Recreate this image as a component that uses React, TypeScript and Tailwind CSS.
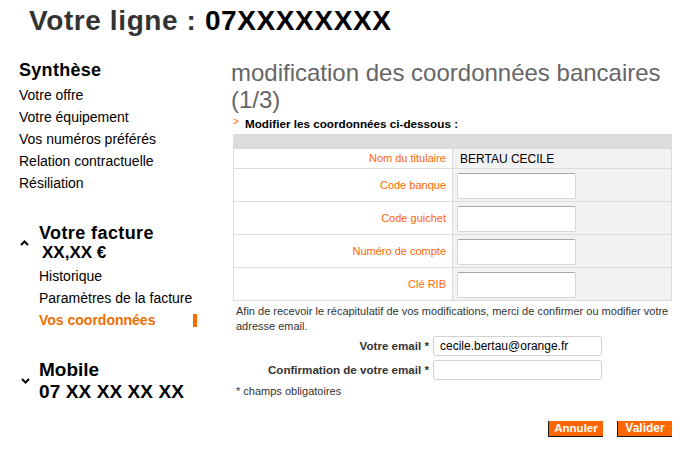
import React from "react";

function Field({ label }: { label: string }) {
  return (
    <div className="flex h-[33px] border-t border-[#dcdcdc]">
      <div className="w-[219px] shrink-0 border-r border-[#dcdcdc] flex items-center justify-end pr-[6px] text-[11px] text-[#ff6600]">
        {label}
      </div>
      <div className="flex-1 bg-[#f2f2f2] pt-[4px] pl-[4px]">
        <div className="w-[119px] h-[26px] bg-white border border-[#d6d6d6] border-t-[#a8a8a8] rounded-[2px]" />
      </div>
    </div>
  );
}

export default function App() {
  return (
    <div className="w-[686px] h-[454px] bg-white overflow-hidden font-['Liberation_Sans',Arial,Helvetica,sans-serif]">
      <div className="h-[41px] pl-[29px] text-[28px] leading-[41px] font-bold tracking-[0.6px] whitespace-nowrap">
        <span className="text-[#333333]">Votre ligne : </span>
        <span className="text-black">07XXXXXXXX</span>
      </div>
      <div className="flex">
        <aside className="w-[231px] shrink-0 pl-[19px] pt-[17px] text-black">
          <div className="text-[18px] leading-[24px] font-bold tracking-[0.3px]">Synthèse</div>
          <ul className="mt-[2px] text-[14px] leading-[22px]">
            <li>Votre offre</li>
            <li>Votre équipement</li>
            <li>Vos numéros préférés</li>
            <li>Relation contractuelle</li>
            <li>Résiliation</li>
          </ul>
          <div className="mt-[29px] flex items-center">
            <div className="w-[20px] shrink-0 pl-[1px] flex">
              <svg width="9" height="6" viewBox="0 0 9 6">
                <polyline points="1,5 4.5,1.5 8,5" fill="none" stroke="#000" strokeWidth="2" />
              </svg>
            </div>
            <div>
              <div className="text-[18px] leading-[20px] font-bold tracking-[0.4px]">Votre facture</div>
              <div className="ml-[3px] text-[17px] leading-[20px] font-bold">XX,XX €</div>
            </div>
          </div>
          <ul className="mt-[2px] pl-[20px] w-[178px] text-[14px] leading-[22px]">
            <li>Historique</li>
            <li className="whitespace-nowrap">Paramètres de la facture</li>
            <li className="flex items-center justify-between font-bold text-[#f16e00]">
              <span>Vos coordonnées</span>
              <span className="w-[4px] h-[13px] bg-[#f16e00]" />
            </li>
          </ul>
          <div className="mt-[28px] flex items-center">
            <div className="w-[20px] shrink-0 pl-[2px] flex">
              <svg width="9" height="6" viewBox="0 0 9 6">
                <polyline points="1,1 4.5,4.5 8,1" fill="none" stroke="#000" strokeWidth="2" />
              </svg>
            </div>
            <div className="font-bold leading-[22px]">
              <div className="text-[19px]">Mobile</div>
              <div className="text-[19px] tracking-[0.1px] whitespace-nowrap">07 XX XX XX XX</div>
            </div>
          </div>
        </aside>

        <main className="w-[441px] shrink-0 pt-[18px]">
          <h1 className="text-[24px] leading-[27px] text-[#666666] font-normal">
            modification des coordonnées bancaires (1/3)
          </h1>
          <div className="mt-[4px] ml-[2px] flex items-start leading-[14px]">
            <span className="w-[12px] text-[10px] leading-[10px] text-[#ff6600]">&gt;</span>
            <span className="text-[11.7px] font-bold text-black">Modifier les coordonnées ci-dessous :</span>
          </div>

          <div className="mt-[3px] ml-[2px] w-[439px] border border-[#dcdcdc]">
            <div className="h-[14px] bg-[#dcdcdc]" />
            <div className="flex h-[19px]">
              <div className="w-[219px] shrink-0 border-r border-[#dcdcdc] flex items-center justify-end pr-[6px] text-[11px] text-[#ff6600]">
                Nom du titulaire
              </div>
              <div className="flex-1 bg-[#f2f2f2] flex items-center pl-[7px] text-[12px] text-black">
                BERTAU CECILE
              </div>
            </div>
            <Field label="Code banque" />
            <Field label="Code guichet" />
            <Field label="Numéro de compte" />
            <Field label="Clé RIB" />
          </div>

          <p className="mt-[3px] pl-[5px] text-[11px] leading-[15px] text-[#333333]">
            Afin de recevoir le récapitulatif de vos modifications, merci de confirmer ou modifier votre adresse email.
          </p>

          <div className="mt-[2px] flex flex-col gap-[4px]">
            <div className="flex items-center gap-[4px]">
              <div className="w-[198px] text-right text-[11.6px] font-bold text-[#333333]">Votre email *</div>
              <div className="w-[169px] h-[20px] bg-white border border-[#d2d2d2] rounded-[2px] pl-[6px] text-[12px] leading-[18px] text-black">
                cecile.bertau@orange.fr
              </div>
            </div>
            <div className="flex items-center gap-[4px]">
              <div className="w-[198px] text-right text-[11.6px] font-bold text-[#333333]">Confirmation de votre email *</div>
              <div className="w-[169px] h-[20px] bg-white border border-[#d2d2d2] rounded-[2px]" />
            </div>
          </div>

          <div className="mt-[4px] pl-[5px] text-[11px] leading-[15px] text-[#333333]">* champs obligatoires</div>

          <div className="mt-[22px] flex justify-end gap-[14px]">
            <div className="w-[55px] h-[16px] bg-[#ff6600] border-l border-b border-[#1a1a1a] text-white font-bold text-[11.5px] leading-[15px] text-center">
              Annuler
            </div>
            <div className="w-[55px] h-[16px] bg-[#ff6600] border-l border-b border-[#1a1a1a] text-white font-bold text-[12px] leading-[14px] text-center">
              Valider
            </div>
          </div>
        </main>
      </div>
    </div>
  );
}
